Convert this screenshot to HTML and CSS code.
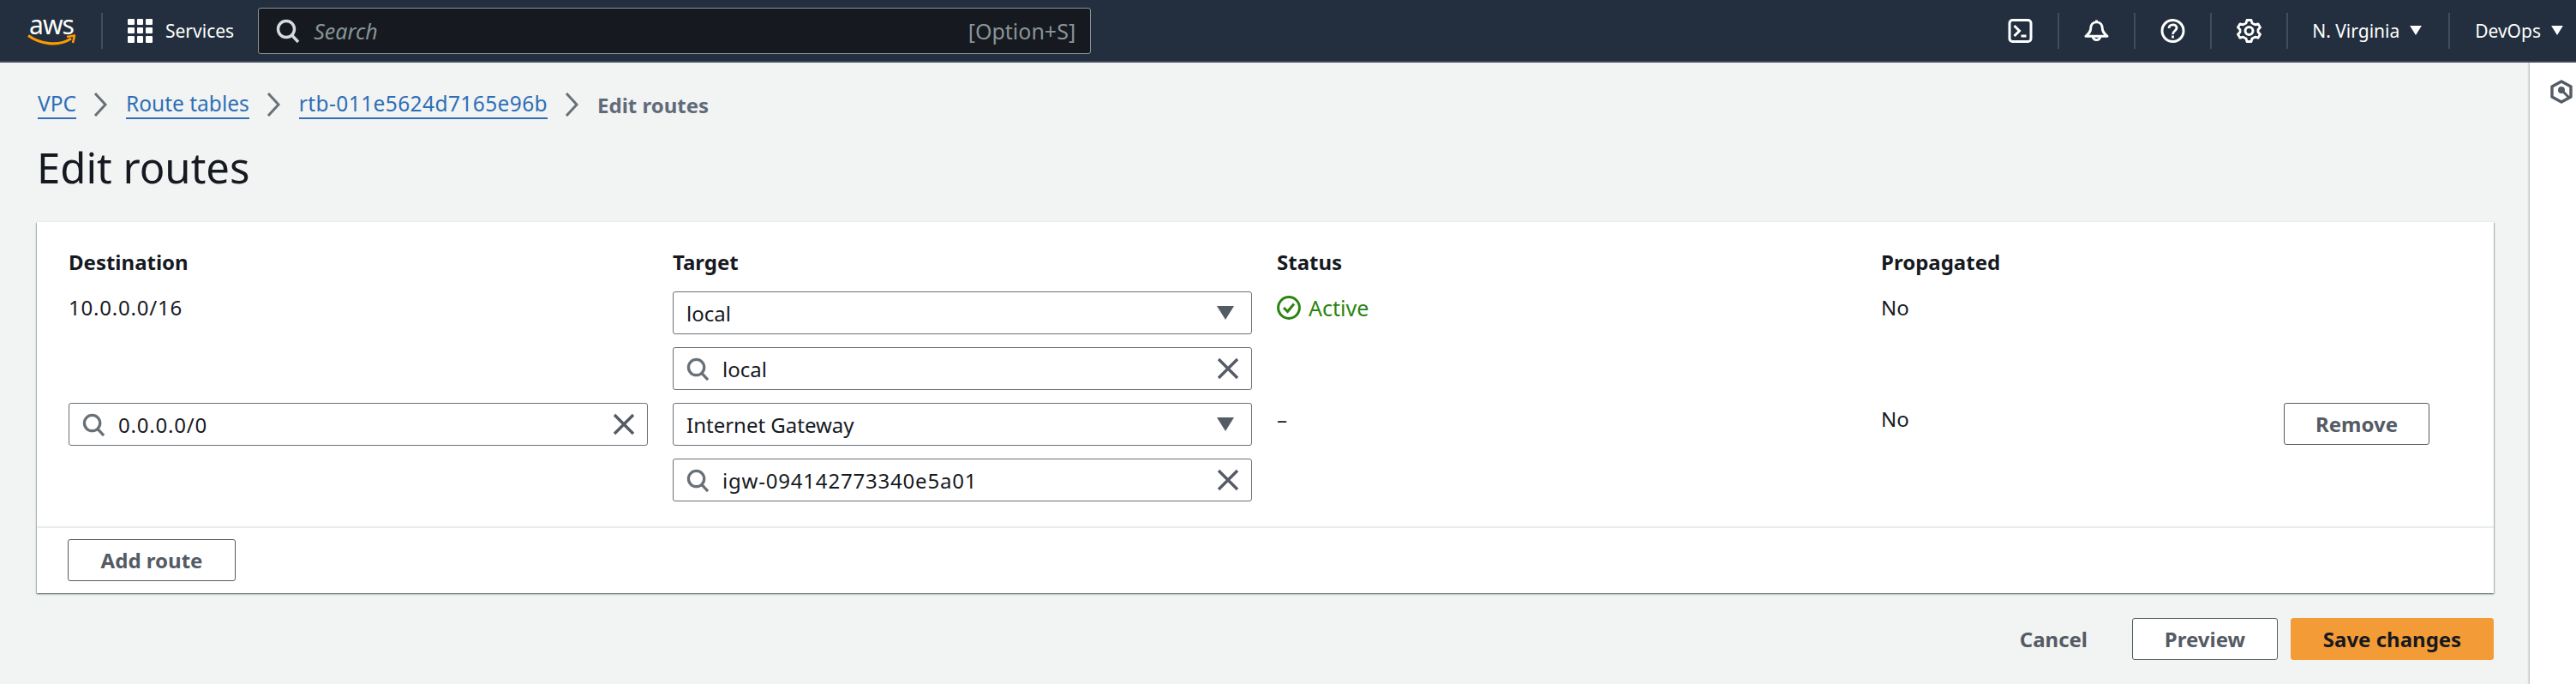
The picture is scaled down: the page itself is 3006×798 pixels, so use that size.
FILE: index.html
```html
<!DOCTYPE html>
<html lang="en">
<head>
  <meta charset="UTF-8" />
  <meta name="viewport" content="width=device-width, initial-scale=1" />
  <title>Edit routes</title>
  <link rel="stylesheet" href="styles.css">
</head>
<body>
  <svg class="sprites" width="0" height="0">
    <symbol id="i-search" viewBox="0 0 28 28">
      <circle cx="12" cy="12" r="9.5" fill="none" stroke="currentColor" stroke-width="3.4"/>
      <path d="M18.5 19 L26 27" fill="none" stroke="currentColor" stroke-width="3.4"/>
    </symbol>
    <symbol id="i-clear" viewBox="0 0 26 26">
      <path d="M2 2 L24 24 M24 2 L2 24" fill="none" stroke="currentColor" stroke-width="3.4"/>
    </symbol>
    <symbol id="i-caret" viewBox="0 0 20 16">
      <path d="M0 0 H20 L10 16 Z" fill="currentColor"/>
    </symbol>
    <symbol id="i-chevron" viewBox="0 0 16 28">
      <path d="M2 1 L14 14 L2 27" fill="none" stroke="currentColor" stroke-width="3"/>
    </symbol>
  </svg>

  <header class="topbar">
    <div class="logo">
      <span class="logo-text">aws</span>
      <svg class="logo-smile" viewBox="0 0 56 14">
        <path d="M1 1.5 C14 11 36 15 51 5" fill="none" stroke="#f90" stroke-width="3.2"/>
        <path d="M46 3 L55 1.5 L53 10" fill="none" stroke="#f90" stroke-width="2.6"/>
      </svg>
    </div>
    <span class="bar-sep logo-sep"></span>
    <div class="services">
      <div class="grid-icon">
        <i></i><i></i><i></i><i></i><i></i><i></i><i></i><i></i><i></i>
      </div>
      <span>Services</span>
    </div>
    <div class="searchbox">
      <svg class="searchbox-icon"><use href="#i-search"/></svg>
      <span class="searchbox-text">Search</span>
      <span class="searchbox-key">[Option+S]</span>
    </div>
    <div class="bar-right">
      <div class="bar-icon">
        <svg viewBox="0 0 28 28"><rect x="1.5" y="1.5" width="25" height="25" rx="3.5" fill="none" stroke="#fff" stroke-width="3"/><path d="M7 8 L13 14 L7 20" fill="none" stroke="#fff" stroke-width="3"/><path d="M15 20 H21" stroke="#fff" stroke-width="3"/></svg>
      </div>
      <span class="bar-sep"></span>
      <div class="bar-icon">
        <svg viewBox="0 0 30 28"><path d="M15 1 V3.5 M15 3.5 C10 3.5 8 7.5 8 11 C8 15 6 17 2 20.5 H28 C24 17 22 15 22 11 C22 7.5 20 3.5 15 3.5 Z" fill="none" stroke="#fff" stroke-width="3" stroke-linejoin="round"/><path d="M10.5 21 A4.6 5 0 0 0 19.5 21" fill="none" stroke="#fff" stroke-width="3"/></svg>
      </div>
      <span class="bar-sep"></span>
      <div class="bar-icon">
        <svg viewBox="0 0 28 28"><circle cx="14" cy="14" r="12.5" fill="none" stroke="#fff" stroke-width="3"/><path d="M9.5 11 C9.5 5.5 18.5 5.5 18.5 10.5 C18.5 14 14 14 14 18" fill="none" stroke="#fff" stroke-width="2.8"/><path d="M14 19.5 V22.5" stroke="#fff" stroke-width="2.8"/></svg>
      </div>
      <span class="bar-sep"></span>
      <div class="bar-icon">
        <svg viewBox="0 0 28 28"><circle cx="14" cy="14" r="4.5" fill="none" stroke="#fff" stroke-width="3"/><path d="M11.5 1.5 H16.5 L17.5 5 L21 6.8 L24.5 5.8 L27 10 L24.5 12.5 V15.5 L27 18 L24.5 22.2 L21 21.2 L17.5 23 L16.5 26.5 H11.5 L10.5 23 L7 21.2 L3.5 22.2 L1 18 L3.5 15.5 V12.5 L1 10 L3.5 5.8 L7 6.8 L10.5 5 Z" fill="none" stroke="#fff" stroke-width="2.8" stroke-linejoin="round"/></svg>
      </div>
      <span class="bar-sep"></span>
      <div class="bar-menu region">
        <span>N. Virginia</span>
        <svg class="bar-caret"><use href="#i-caret"/></svg>
      </div>
      <span class="bar-sep"></span>
      <div class="bar-menu account">
        <span>DevOps</span>
        <svg class="bar-caret"><use href="#i-caret"/></svg>
      </div>
    </div>
  </header>

  <div class="layout">
    <main class="content">
      <nav class="crumbs">
        <a class="crumb-link" href="#">VPC</a>
        <svg class="crumb-sep"><use href="#i-chevron"/></svg>
        <a class="crumb-link" href="#">Route tables</a>
        <svg class="crumb-sep"><use href="#i-chevron"/></svg>
        <a class="crumb-link crumb-id" href="#">rtb-011e5624d7165e96b</a>
        <svg class="crumb-sep"><use href="#i-chevron"/></svg>
        <span class="crumb-current">Edit routes</span>
      </nav>

      <h1>Edit routes</h1>

      <section class="card">
        <div class="routes">
          <div class="route-row head">
            <div>Destination</div>
            <div>Target</div>
            <div>Status</div>
            <div>Propagated</div>
          </div>

          <div class="route-row">
            <div class="cell-text id-text">10.0.0.0/16</div>
            <div class="stack">
              <div class="field select">
                <span class="field-value">local</span>
                <svg class="field-caret"><use href="#i-caret"/></svg>
              </div>
              <div class="field">
                <svg class="field-search"><use href="#i-search"/></svg>
                <span class="field-value">local</span>
                <svg class="field-clear"><use href="#i-clear"/></svg>
              </div>
            </div>
            <div class="cell-text status-active">
              <svg class="status-icon" viewBox="0 0 28 28"><circle cx="14" cy="14" r="12.4" fill="none" stroke="currentColor" stroke-width="3"/><path d="M8 14 L12.5 18.5 L20 9.5" fill="none" stroke="currentColor" stroke-width="3"/></svg>
              <span>Active</span>
            </div>
            <div class="cell-text">No</div>
            <div></div>
          </div>

          <div class="route-row">
            <div class="stack">
              <div class="field">
                <svg class="field-search"><use href="#i-search"/></svg>
                <span class="field-value id-text">0.0.0.0/0</span>
                <svg class="field-clear"><use href="#i-clear"/></svg>
              </div>
            </div>
            <div class="stack">
              <div class="field select">
                <span class="field-value">Internet Gateway</span>
                <svg class="field-caret"><use href="#i-caret"/></svg>
              </div>
              <div class="field">
                <svg class="field-search"><use href="#i-search"/></svg>
                <span class="field-value id-text">igw-094142773340e5a01</span>
                <svg class="field-clear"><use href="#i-clear"/></svg>
              </div>
            </div>
            <div class="cell-text">–</div>
            <div class="cell-text">No</div>
            <div><button class="btn btn-wide">Remove</button></div>
          </div>
        </div>

        <div class="card-foot">
          <button class="btn btn-add">Add route</button>
        </div>
      </section>

      <div class="actions">
        <button class="btn-link">Cancel</button>
        <button class="btn btn-wide">Preview</button>
        <button class="btn btn-primary">Save changes</button>
      </div>
    </main>

    <aside class="sidepanel">
      <svg class="sidepanel-icon" viewBox="0 0 26 28"><path d="M13 2 L24 8 V20 L13 26 L2 20 V8 Z" fill="none" stroke="#545b64" stroke-width="3.4" stroke-linejoin="round"/><circle cx="13" cy="12" r="4" fill="#545b64"/><path d="M15 14 L22 21" stroke="#545b64" stroke-width="3"/></svg>
    </aside>
  </div>
</body>
</html>
```

FILE: styles.css
```css
:root {
  --nav: #232f3e;
  --page: #f2f3f3;
  --text: #16191f;
  --grey: #545b64;
  --field: #687078;
  --link: #2e6fb7;
}
* { box-sizing: border-box; }
html, body { height: 100%; }
body {
  margin: 0;
  overflow: hidden;
  background: var(--page);
  color: var(--text);
  font-family: 'Noto Sans', 'Open Sans', sans-serif;
  font-size: 24px;
  display: flex;
  flex-direction: column;
}
.sprites { position: absolute; }
.id-text { letter-spacing: 0.8px; }

/* top bar */
.topbar {
  height: 73px;
  flex: none;
  display: flex;
  align-items: center;
  background: var(--nav);
  border-bottom: 2px solid #414d5c;
  color: #fff;
  font-size: 21px;
}
.logo {
  width: 56px;
  margin-left: 32px;
  height: 36px;
  display: flex;
  flex-direction: column;
  align-items: center;
}
.logo-text {
  font-size: 30px;
  line-height: 22px;
  height: 22px;
  letter-spacing: -1px;
}
.logo-smile { width: 56px; height: 14px; }
.bar-sep {
  width: 2px;
  height: 42px;
  background: #414d5c;
  flex: none;
}
.logo-sep { margin-left: 30px; }
.services {
  display: flex;
  align-items: center;
  gap: 15px;
  margin-left: 29px;
}
.grid-icon {
  width: 29px;
  height: 28px;
  display: grid;
  grid-template-columns: repeat(3, 1fr);
  gap: 3px;
}
.grid-icon i { background: #fff; display: block; border-radius: 1px; }
.searchbox {
  width: 972px;
  height: 54px;
  margin-left: 28px;
  display: flex;
  align-items: center;
  background: #16191f;
  border: 1px solid #879596;
  border-radius: 3px;
  padding: 0 17px 0 20px;
  font-size: 25px;
}
.searchbox-icon { width: 28px; height: 28px; color: #d5dbdb; }
.searchbox-text {
  margin-left: 16px;
  font-style: italic;
  color: #879596;
  flex: 1;
}
.searchbox-key { color: #879596; }
.bar-right {
  margin-left: auto;
  display: flex;
  align-items: center;
}
.bar-icon {
  width: 87px;
  display: flex;
  justify-content: center;
}
.bar-icon svg { width: 29px; height: 28px; display: block; }
.bar-menu {
  display: flex;
  align-items: center;
  gap: 12px;
}
.region { width: 187px; padding-left: 28px; }
.account { padding: 0 15px 0 29px; }
.bar-caret { width: 14px; height: 11px; }

/* page */
.layout {
  flex: 1;
  display: flex;
  min-height: 0;
}
.content {
  flex: 1;
  min-width: 0;
  padding: 0 42px 0 43px;
}
.sidepanel {
  width: 54px;
  flex: none;
  background: #fff;
  box-shadow: -1px 0 2px rgba(0, 28, 36, 0.3);
  padding: 20px 0 0 24px;
}
.sidepanel-icon { width: 26px; height: 28px; display: block; }

.crumbs {
  display: flex;
  align-items: center;
  height: 52px;
  margin-top: 23px;
  padding-left: 1px;
  font-size: 24.5px;
}
.crumb-link {
  color: var(--link);
  text-decoration: none;
  border-bottom: 2px solid var(--link);
  line-height: 32px;
}
.crumb-id { letter-spacing: 0.4px; }
.crumb-sep {
  width: 16px;
  height: 28px;
  margin: 0 22px 0 20px;
  color: var(--field);
}
.crumb-current {
  color: #5f6b7a;
  font-weight: 700;
  font-size: 24px;
}
h1 {
  font-size: 49px;
  font-weight: 400;
  line-height: 64px;
  margin: 15px 0 0;
}

/* routes card */
.card {
  margin-top: 32px;
  height: 433px;
  background: #fff;
  box-shadow: 0 1px 2px rgba(0, 28, 36, 0.5), 1px 1px 1px rgba(0, 28, 36, 0.15), -1px 1px 1px rgba(0, 28, 36, 0.15);
}
.routes { padding: 30px 0 14px 37px; }
.route-row {
  display: grid;
  grid-template-columns: 676px 676px 676px 441px 170px;
  column-gap: 29px;
  margin-bottom: 15px;
}
.head {
  font-weight: 700;
  line-height: 34px;
  margin-bottom: 17px;
}
.cell-text { line-height: 36px; padding-top: 1px; }
.stack {
  display: flex;
  flex-direction: column;
  gap: 15px;
}
.field {
  height: 50px;
  display: flex;
  align-items: center;
  padding: 0 14px 0 15px;
  border: 1px solid var(--field);
  border-radius: 3px;
  background: #fff;
}
.field-value { flex: 1; }
.field-search {
  width: 27px;
  height: 27px;
  margin-right: 15px;
  color: var(--field);
}
.field-clear { width: 26px; height: 26px; color: var(--grey); }
.field-caret { width: 20px; height: 16px; color: var(--grey); margin-right: 6px; }

.status-active {
  display: flex;
  align-items: center;
  gap: 9px;
  color: #2a8410;
  height: 36px;
  font-size: 25px;
}
.status-icon { width: 28px; height: 28px; }

.card-foot {
  border-top: 2px solid #eaeded;
  padding: 13px 0 0 36px;
}

/* buttons */
.btn {
  height: 49px;
  font: 700 24px 'Noto Sans', sans-serif;
  color: var(--grey);
  background: #fff;
  border: 1px solid var(--grey);
  border-radius: 3px;
  padding: 0;
  display: block;
}
.btn-wide { width: 170px; }
.btn-add { width: 196px; }
.btn-primary {
  width: 237px;
  color: var(--text);
  background: #f39c37;
  border-color: #f39c37;
}
.btn-link {
  font: 700 24px 'Noto Sans', sans-serif;
  color: var(--grey);
  background: none;
  border: 0;
  padding: 0;
  margin-right: 37px;
}
.actions {
  display: flex;
  justify-content: flex-end;
  align-items: center;
  gap: 15px;
  margin-top: 29px;
}
```
